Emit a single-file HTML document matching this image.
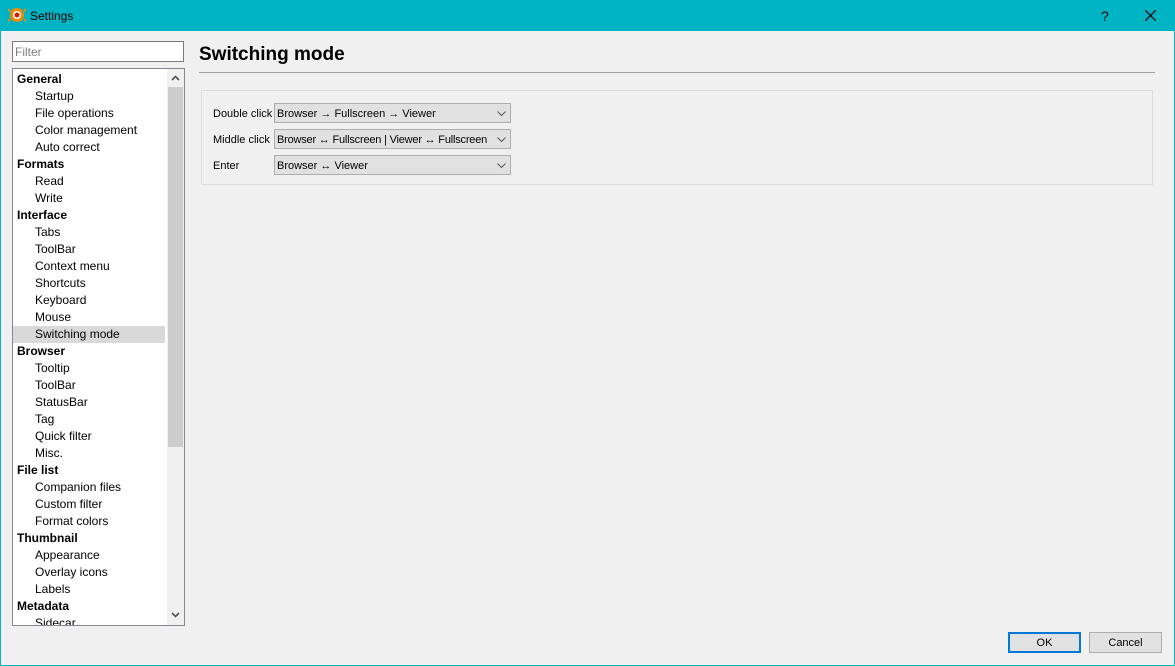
<!DOCTYPE html>
<html><head><style>
*{margin:0;padding:0;box-sizing:border-box}
body{width:1175px;height:666px;background:#00b4c4;font-family:"Liberation Sans",sans-serif;font-size:12px;color:#000;position:relative;overflow:hidden}
.win{position:absolute;left:1px;top:31px;width:1173px;height:634px;background:#f0f0f0}
.title{position:absolute;left:30px;top:9px;font-size:12px;color:#000}
.abs{position:absolute}
.filter{left:11px;top:10px;width:172px;height:21px;border:1px solid #7a7a7a;background:#fff;color:#808080;padding:3px 2px;font-size:12px}
.list{left:11px;top:37px;width:173px;height:558px;border:1px solid #828790;background:#fff;overflow:hidden}
.row{height:17px;line-height:17px;padding-left:4px;white-space:nowrap}
.row.c{padding-left:22px}
.row.h{font-weight:bold}
.row.sel{background:#d9d9d9;width:152px}
.sb{position:absolute;right:0;top:0;width:17px;height:556px;background:#f0f0f0}
.thumb{position:absolute;left:1px;top:18px;width:15px;height:360px;background:#cdcdcd}
h1{position:absolute;left:198px;top:13px;font-size:19px;font-weight:bold}
.hr{left:198px;top:41px;width:956px;height:1px;background:#a0a0a0}
.grp{left:200px;top:59px;width:952px;height:95px;border:1px solid #dcdcdc}
.lbl{position:absolute;left:11px;font-size:11px}
.cb{position:absolute;left:72px;width:237px;height:20px;border:1px solid #adadad;background:#e1e1e1;padding-left:2px;line-height:20px;font-size:11px;white-space:nowrap;overflow:hidden}
.cb svg{position:absolute;right:4px;top:7px}
.btn{top:601px;width:73px;height:21px;border:1px solid #adadad;background:#e1e1e1;text-align:center;line-height:20px;font-size:11px}
</style></head><body>
<svg class="abs" style="left:8px;top:7px" width="18" height="16" viewBox="0 0 18 16"><circle cx="9" cy="8" r="7" fill="#f08a00"/><path d="M2 4 L0 2 M16 4 L18 2 M2 12 L0 14 M16 12 L18 14" stroke="#f08a00" stroke-width="2"/><circle cx="9" cy="8" r="4" fill="#fff"/><circle cx="9" cy="8" r="2.5" fill="#d02000"/></svg>
<div class="title">Settings</div>
<div class="abs" style="left:1101px;top:8px;font-size:14px">?</div>
<svg class="abs" style="left:1145px;top:10px" width="11" height="11"><path d="M0 0L11 11M11 0L0 11" stroke="#000" stroke-width="1.2"/></svg>
<div class="win">
<div class="abs filter">Filter</div>
<div class="abs list">
<div style="height:2px"></div>
<div class="row h">General</div><div class="row c">Startup</div><div class="row c">File operations</div><div class="row c">Color management</div><div class="row c">Auto correct</div>
<div class="row h">Formats</div><div class="row c">Read</div><div class="row c">Write</div>
<div class="row h">Interface</div><div class="row c">Tabs</div><div class="row c">ToolBar</div><div class="row c">Context menu</div><div class="row c">Shortcuts</div><div class="row c">Keyboard</div><div class="row c">Mouse</div><div class="row c sel">Switching mode</div>
<div class="row h">Browser</div><div class="row c">Tooltip</div><div class="row c">ToolBar</div><div class="row c">StatusBar</div><div class="row c">Tag</div><div class="row c">Quick filter</div><div class="row c">Misc.</div>
<div class="row h">File list</div><div class="row c">Companion files</div><div class="row c">Custom filter</div><div class="row c">Format colors</div>
<div class="row h">Thumbnail</div><div class="row c">Appearance</div><div class="row c">Overlay icons</div><div class="row c">Labels</div>
<div class="row h">Metadata</div><div class="row c">Sidecar</div>
<div class="sb"><div class="thumb"></div>
<svg class="abs" style="left:4px;top:6px" width="9" height="6"><path d="M1 5L4.5 1.5L8 5" stroke="#505050" stroke-width="1.6" fill="none"/></svg>
<svg class="abs" style="left:4px;top:543px" width="9" height="6"><path d="M1 1L4.5 4.5L8 1" stroke="#505050" stroke-width="1.6" fill="none"/></svg>
</div></div>
<h1>Switching mode</h1>
<div class="abs hr"></div>
<div class="abs grp">
<div class="lbl" style="top:17px">Double click</div>
<div class="cb" style="top:12px">Browser → Fullscreen → Viewer<svg width="9" height="6"><path d="M0.5 0.5L4.5 4.5L8.5 0.5" stroke="#555" fill="none"/></svg></div>
<div class="lbl" style="top:43px">Middle click</div>
<div class="cb" style="top:38px;letter-spacing:-0.2px">Browser ↔ Fullscreen | Viewer ↔ Fullscreen<svg width="9" height="6"><path d="M0.5 0.5L4.5 4.5L8.5 0.5" stroke="#555" fill="none"/></svg></div>
<div class="lbl" style="top:69px">Enter</div>
<div class="cb" style="top:64px">Browser ↔ Viewer<svg width="9" height="6"><path d="M0.5 0.5L4.5 4.5L8.5 0.5" stroke="#555" fill="none"/></svg></div>
</div>
<div class="abs btn" style="left:1007px;border:2px solid #0078d7;line-height:18px">OK</div>
<div class="abs btn" style="left:1088px">Cancel</div>
</div>
</body></html>
